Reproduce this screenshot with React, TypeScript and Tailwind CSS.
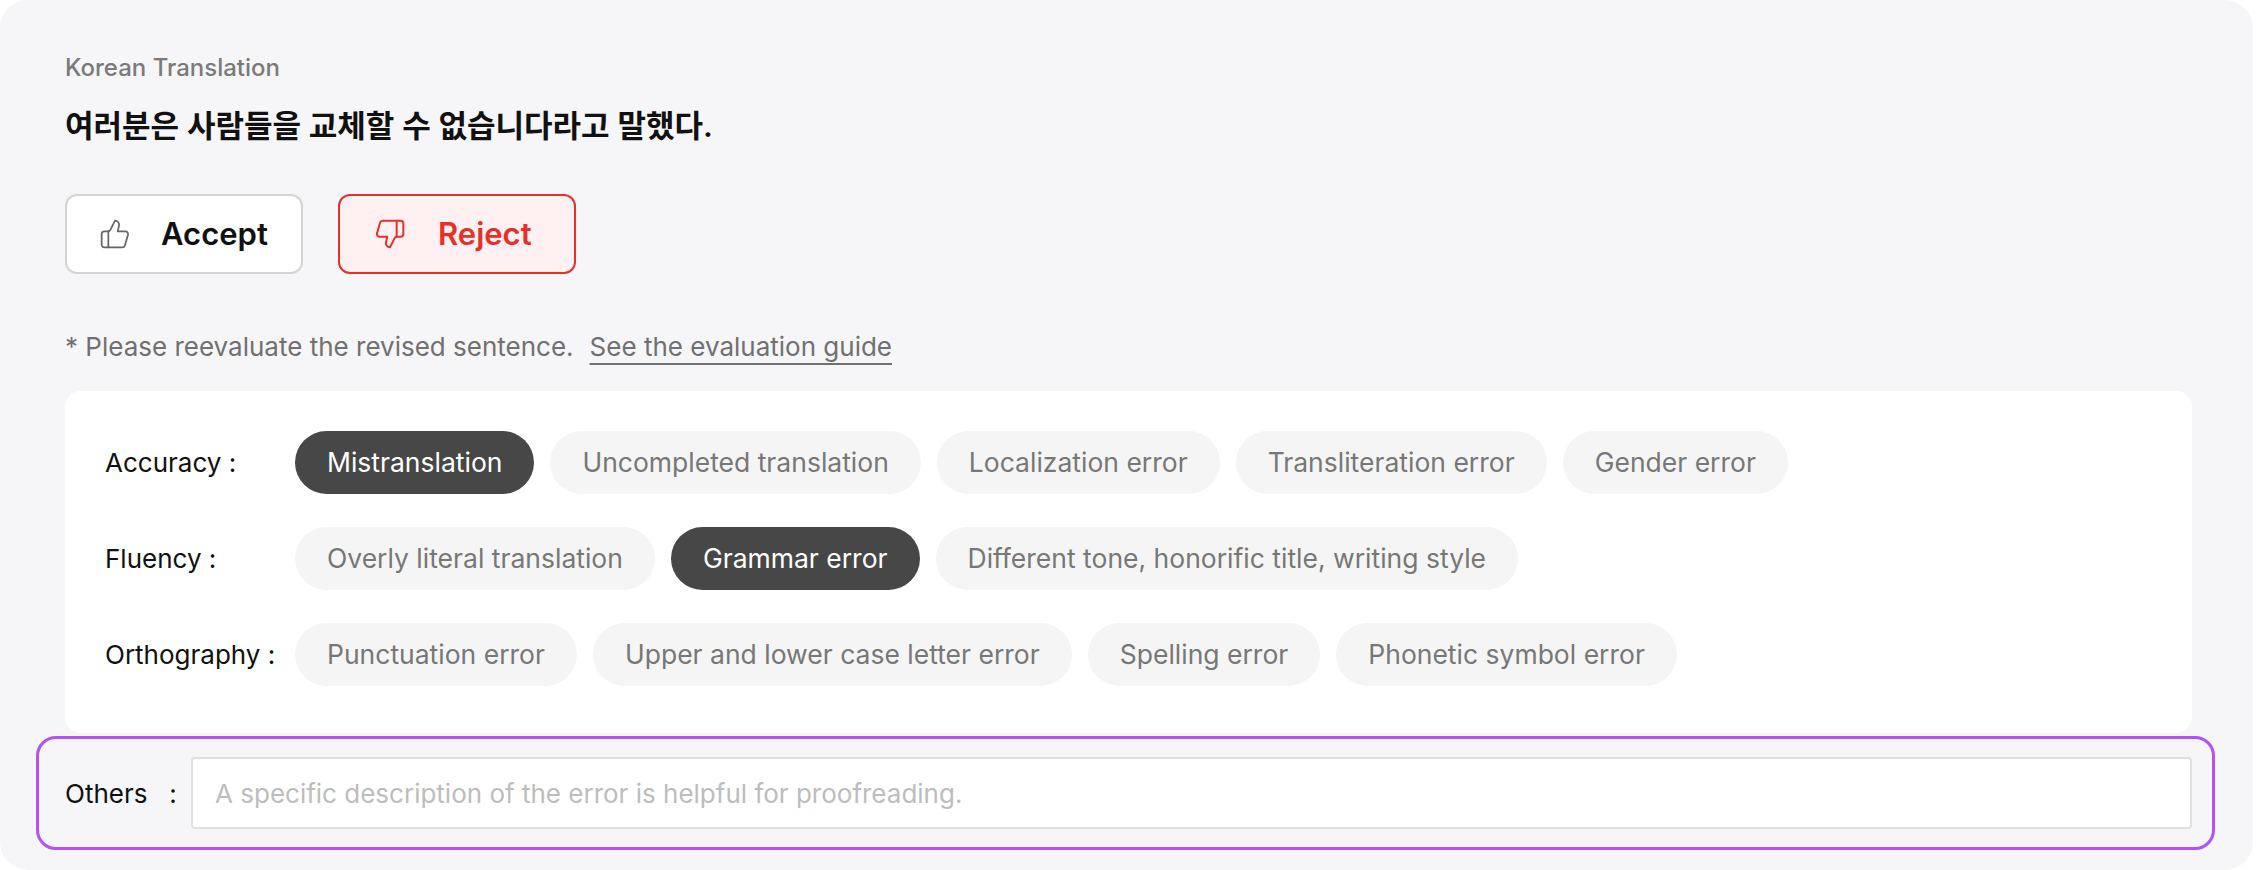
import React from 'react';
import { ThumbsUp, ThumbsDown } from 'lucide-react';

const rows: { label: string; chips: { text: string; on?: boolean }[] }[] = [
  {
    label: 'Accuracy :',
    chips: [
      { text: 'Mistranslation', on: true },
      { text: 'Uncompleted translation' },
      { text: 'Localization error' },
      { text: 'Transliteration error' },
      { text: 'Gender error' },
    ],
  },
  {
    label: 'Fluency :',
    chips: [
      { text: 'Overly literal translation' },
      { text: 'Grammar error', on: true },
      { text: 'Different tone, honorific title, writing style' },
    ],
  },
  {
    label: 'Orthography :',
    chips: [
      { text: 'Punctuation error' },
      { text: 'Upper and lower case letter error' },
      { text: 'Spelling error' },
      { text: 'Phonetic symbol error' },
    ],
  },
];

export default function App() {
  return (
    <div
      className="w-[2256px] h-[870px] bg-white"
      style={{ fontFamily: 'Inter, "Noto Sans CJK KR", sans-serif' }}
    >
      <div className="h-[870px] w-[2253px] rounded-[28px] bg-[#f6f6f8] pl-[65px] pr-[61px] pt-[50px]">
        <div className="text-[24px] font-medium text-[#7a7a7a] leading-[36px]">Korean Translation</div>
        <div className="mt-[20px] text-[31px] font-semibold text-[#111] leading-[40px]">
          여러분은 사람들을 교체할 수 없습니다라고 말했다.
        </div>

        <div className="mt-[48px] flex gap-[35px]">
          <button className="flex h-[80px] w-[238px] items-center rounded-[12px] border-2 border-[#d4d4d4] bg-white pl-[32px] text-[31px] font-semibold text-[#111]">
            <ThumbsUp className="h-[32px] w-[32px] text-[#666]" strokeWidth={1.3} />
            <span className="ml-[30px]">Accept</span>
          </button>
          <button className="flex h-[80px] w-[238px] items-center rounded-[12px] border-2 border-[#e8302a] bg-[#fff1f1] pl-[34px] text-[31px] font-semibold text-[#e8302a]">
            <ThumbsDown className="h-[32px] w-[32px]" strokeWidth={1.5} />
            <span className="ml-[32px]">Reject</span>
          </button>
        </div>

        <div className="mt-[55px] flex text-[26px] leading-[36px] text-[#707070]">
          <span>* Please reevaluate the revised sentence.</span>
          <span className="ml-[16px] underline underline-offset-[7px] decoration-[2px]">See the evaluation guide</span>
        </div>

        <div className="mt-[26px] flex flex-col gap-[33px] rounded-[16px] bg-white px-[40px] pb-[47px] pt-[40px]">
          {rows.map((r) => (
            <div key={r.label} className="flex items-center">
              <div className="w-[190px] text-[26px] text-[#111]">{r.label}</div>
              <div className="flex gap-[16px]">
                {r.chips.map((c) => (
                  <div
                    key={c.text}
                    className={
                      c.on
                        ? 'flex h-[63px] items-center rounded-full bg-[#474747] px-[32px] text-[26.5px] text-white'
                        : 'flex h-[63px] items-center rounded-full bg-[#f5f5f5] px-[32px] text-[26.5px] text-[#777]'
                    }
                  >
                    {c.text}
                  </div>
                ))}
              </div>
            </div>
          ))}
        </div>

        <div className="-ml-[29px] -mr-[23px] mt-[3px] flex h-[114px] items-center rounded-[20px] border-[3px] border-[#b054f7] pl-[26px] pr-[20px]">
          <span className="w-[126px] text-[26px] text-[#111]">Others&nbsp;&nbsp;&nbsp;:</span>
          <input
            className="h-[72px] flex-1 rounded-[4px] border-2 border-[#e0e0e0] bg-white px-[22px] text-[26px] outline-none placeholder:text-[#bdbdbd]"
            placeholder="A specific description of the error is helpful for proofreading."
          />
        </div>
      </div>
    </div>
  );
}
